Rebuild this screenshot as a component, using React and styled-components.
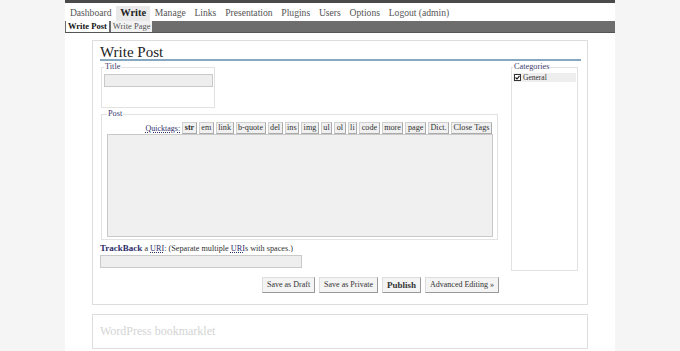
import React from "react";
import styled, { createGlobalStyle } from "styled-components";

const Global = createGlobalStyle`
  html, body { margin: 0; padding: 0; background: #f5f5f5; }
  body { font-family: "Liberation Serif", "Times New Roman", serif; color: #333; }
`;

const Page = styled.div`
  width: 550px;
  margin: 0 auto;
  background: #fff;
  height: 351px;
  overflow: hidden;
  border-top: 3px solid #4a4a4a;
  box-sizing: border-box;
`;

const Nav = styled.ul`
  list-style: none;
  margin: 0;
  padding: 3px 0 0 0.5px;
  display: flex;
  height: 15px;
  align-items: stretch;
`;

const NavItem = styled.li`
  font-size: ${(p) => (p.$current ? "10.4px" : "9.6px")};
  line-height: 14px;
  padding: 0 4.4px;
  color: ${(p) => (p.$current ? "#222" : "#555")};
  font-weight: ${(p) => (p.$current ? "bold" : "normal")};
  background: ${(p) => (p.$current ? "#e9e9e9" : "transparent")};
`;

const SubNav = styled.div`
  height: 11px;
  background: #6d6d6d;
  border-bottom: 1px solid #555;
  display: flex;
  align-items: stretch;
  padding-left: 1px;
`;

const SubTab = styled.div`
  font-size: 8.5px;
  line-height: 11px;
  padding: 0 2px;
  margin-right: 2px;
  color: ${(p) => (p.$current ? "#111" : "#555")};
  font-weight: ${(p) => (p.$current ? "bold" : "normal")};
  background: ${(p) => (p.$current ? "#fff" : "#f2f2f2")};
`;

const Box = styled.div`
  margin: ${(p) => p.$mt}px 27px 0 27px;
  border: 1px solid #ddd;
  padding: 5px 8px 11px 7px;
  background: #fff;
`;

const Heading = styled.h2`
  margin: 0 -2px 0 0;
  font-size: 15px;
  font-weight: normal;
  color: #222;
  line-height: 13px;
  border-bottom: 2px solid #86a8c3;
`;

const Columns = styled.div`
  display: flex;
  align-items: flex-start;
`;

const Left = styled.div`
  width: 398px;
  display: flex;
  flex-direction: column;
`;

const Fieldset = styled.fieldset`
  margin: 0;
  border: 1px solid #e2e2e2;
  min-width: 0;
  box-sizing: border-box;
  & > legend {
    font-size: 8.3px;
    color: #3a3a6e;
    padding: 0 1px;
    margin-left: 0px;
    line-height: 8px;
  }
`;

const TitleSet = styled(Fieldset)`
  width: 114px;
  margin: 2px 0 0 1px;
  padding: 0 1px 20px 2px;
`;

const GrayInput = styled.div`
  width: ${(p) => p.$w}px;
  height: ${(p) => p.$h}px;
  background: #eee;
  border: 1px solid #c9c9c9;
  box-sizing: border-box;
`;

const TitleInput = styled(GrayInput)`
  margin-top: 3px;
`;

const PostSet = styled(Fieldset)`
  margin: 2px 0 0 1px;
  padding: 0 4px 2px 5px;
`;

const QuickRow = styled.div`
  display: flex;
  justify-content: flex-end;
  align-items: center;
  gap: 2px;
  height: 12px;
  margin-top: 4px;
  padding-right: 1px;
`;

const QuickLabel = styled.span`
  font-size: 8px;
  color: #2d2d6a;
  text-decoration: underline dotted;
`;

const QButton = styled.span`
  font-size: 8.2px;
  line-height: 10px;
  height: 12px;
  box-sizing: border-box;
  padding: 0 1.5px;
  border: 1px solid #d0d0d0;
  border-right-color: #aaa;
  border-bottom-color: #aaa;
  background: #f0f0f0;
  color: #333;
  font-weight: ${(p) => (p.$bold ? "bold" : "normal")};
`;

const TextArea = styled.div`
  height: 103px;
  background: #f0f0f0;
  border: 1px solid #c9c9c9;
  box-sizing: border-box;
`;

const TrackLine = styled.div`
  font-size: 8.2px;
  margin-top: 3px;
  color: #333;
  line-height: 11px;
  & b { color: #2d2d6a; font-size: 9px; }
  & abbr { color: #2d2d6a; text-decoration: underline dotted; }
`;

const TrackInput = styled(GrayInput)`
  margin-top: 1px;
`;

const Buttons = styled.div`
  display: flex;
  justify-content: flex-end;
  gap: 4px;
  margin-top: 9px;
  margin-right: -1px;
`;

const Btn = styled.span`
  height: 16px;
  line-height: 14px;
  box-sizing: border-box;
  padding: 0 4px;
  border: 1px solid #ddd;
  border-right-color: #999;
  border-bottom-color: #999;
  background: #f4f4f4;
  color: #333;
  font-weight: ${(p) => (p.$bold ? "bold" : "normal")};
  font-size: ${(p) => (p.$bold ? "9px" : "8px")};
`;

const CatSet = styled(Fieldset)`
  width: 67px;
  height: 208px;
  margin: 2px 0 0 13px;
  padding: 0 1px;
`;

const CatRow = styled.div`
  display: flex;
  align-items: center;
  gap: 2px;
  background: #eee;
  height: 9px;
  margin-top: 2px;
  font-size: 7.5px;
  color: #333;
  padding-left: 1px;
`;

const Check = styled.span`
  width: 5px;
  height: 5px;
  border: 1px solid #333;
  background: #fff;
  position: relative;
  display: inline-block;
`;

const SecondHeading = styled.div`
  font-size: 12px;
  line-height: 12px;
  color: #d4d4d4;
  padding-top: 5px;
`;

const tags = [
  ["str", true],
  ["em"],
  ["link"],
  ["b-quote"],
  ["del"],
  ["ins"],
  ["img"],
  ["ul"],
  ["ol"],
  ["li"],
  ["code"],
  ["more"],
  ["page"],
  ["Dict."],
  ["Close Tags"],
];

export default function App() {
  return (
    <>
      <Global />
      <Page>
        <Nav>
          <NavItem>Dashboard</NavItem>
          <NavItem $current>Write</NavItem>
          <NavItem>Manage</NavItem>
          <NavItem>Links</NavItem>
          <NavItem>Presentation</NavItem>
          <NavItem>Plugins</NavItem>
          <NavItem>Users</NavItem>
          <NavItem>Options</NavItem>
          <NavItem>Logout (admin)</NavItem>
        </Nav>
        <SubNav>
          <SubTab $current>Write Post</SubTab>
          <SubTab>Write Page</SubTab>
        </SubNav>
        <Box $mt={7}>
          <Heading>Write Post</Heading>
          <Columns>
            <Left>
              <TitleSet>
                <legend>Title</legend>
                <TitleInput $w={109} $h={13} />
              </TitleSet>
              <PostSet>
                <legend>Post</legend>
                <QuickRow>
                  <QuickLabel>Quicktags:</QuickLabel>
                  {tags.map(([t, b]) => (
                    <QButton key={t} $bold={b}>
                      {t}
                    </QButton>
                  ))}
                </QuickRow>
                <TextArea />
              </PostSet>
              <TrackLine>
                <b>TrackBack</b> a <abbr>URI</abbr>: (Separate multiple <abbr>URI</abbr>s with spaces.)
              </TrackLine>
              <TrackInput $w={202} $h={13} />
              <Buttons>
                <Btn>Save as Draft</Btn>
                <Btn>Save as Private</Btn>
                <Btn $bold>Publish</Btn>
                <Btn>Advanced Editing »</Btn>
              </Buttons>
            </Left>
            <CatSet>
              <legend>Categories</legend>
              <CatRow>
                <Check>
                  <svg width="5" height="5" viewBox="0 0 5 5" style={{ position: "absolute", left: 0, top: 0 }}>
                    <path d="M0.5 2.5 L2 4 L4.5 0.8" stroke="#111" strokeWidth="1.1" fill="none" />
                  </svg>
                </Check>
                General
              </CatRow>
            </CatSet>
          </Columns>
        </Box>
        <Box $mt={9}>
          <SecondHeading>WordPress bookmarklet</SecondHeading>
        </Box>
      </Page>
    </>
  );
}
